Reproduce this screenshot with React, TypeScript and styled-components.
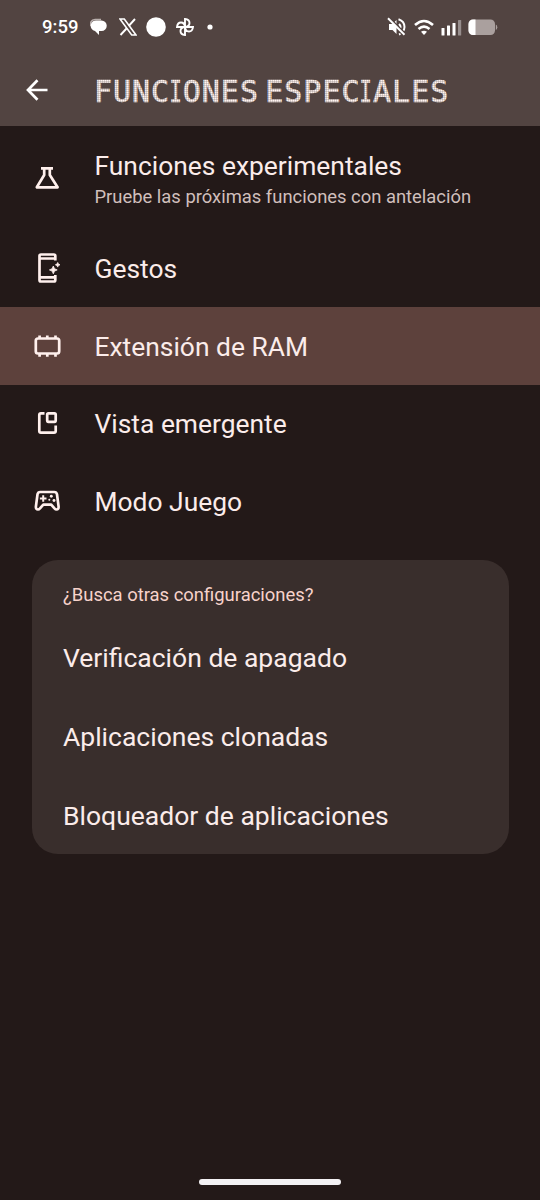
import React from "react";
import styled, { createGlobalStyle } from "styled-components";

const Global = createGlobalStyle`
  * { box-sizing: border-box; }
  body { margin: 0; background: #231918; }
`;

const Screen = styled.div`
  width: 540px;
  height: 1200px;
  display: flex;
  flex-direction: column;
  background: #231918;
  color: #fbecea;
  font-family: Roboto, "Liberation Sans", sans-serif;
  overflow: hidden;
`;

const TopArea = styled.header`
  height: 126px;
  flex: none;
  background: #524441;
`;

const StatusBar = styled.div`
  height: 54px;
  display: flex;
  justify-content: space-between;
  padding: 0 42px 0 42px;
  color: #fff;
`;

const StatusGroup = styled.div`
  display: flex;
  align-items: center;
`;

const Clock = styled.span`
  width: 48px;
  font-size: 18.5px;
  font-weight: 500;
  line-height: 52px;
  white-space: nowrap;
`;

const StatusIcon = styled.svg<{ $gap?: number }>`
  display: block;
  flex: none;
  margin-left: ${(p) => p.$gap ?? 0}px;
`;

const TitleBar = styled.div`
  height: 72px;
  display: flex;
  align-items: center;
  padding-left: 25px;
`;

const BackButton = styled.button`
  width: 69px;
  height: 24px;
  padding: 0;
  border: 0;
  background: none;
  color: #fff;
  flex: none;
`;

const DotTitle = styled.h1`
  position: relative;
  margin: 4px 0 0;
  height: 24px;
  width: 358px;
  font: 400 30px/24px "DejaVu Sans Mono", monospace;
  letter-spacing: 0.98px;
  word-spacing: -12.7px;
  white-space: nowrap;
  color: #fff4f1;
  -webkit-text-stroke: 0.6px #fff4f1;

  &::after {
    content: "";
    position: absolute;
    inset: -2px 0;
    background:
      repeating-linear-gradient(90deg, rgba(82, 68, 65, 0.2) 0 1px, transparent 1px 2px),
      repeating-linear-gradient(0deg, rgba(82, 68, 65, 0.2) 0 1px, transparent 1px 2px);
  }
`;

const NarrowLetter = styled.span`
  display: inline-block;
  width: 12.6px;
  transform: translateX(-0.5px) scaleX(0.68);
  transform-origin: 0 0;
`;

const List = styled.main`
  display: flex;
  flex-direction: column;
`;

const Row = styled.div<{ $active?: boolean; $tall?: boolean }>`
  height: ${(p) => (p.$tall ? 103.5 : 77.5)}px;
  display: flex;
  align-items: center;
  background: ${(p) => (p.$active ? "#5d413c" : "transparent")};
`;

const IconSlot = styled.div`
  width: 94.5px;
  height: 40px;
  flex: none;
  padding-left: 31px;
  display: flex;
  align-items: center;
`;

const Labels = styled.div<{ $tall?: boolean }>`
  display: flex;
  flex-direction: column;
  padding-top: ${(p) => (p.$tall ? 3.5 : 2)}px;
`;

const Label = styled.span<{ $size?: number }>`
  font-size: ${(p) => p.$size ?? 26.4}px;
  line-height: 34px;
  white-space: nowrap;
`;

const Detail = styled.span`
  font-size: 18.4px;
  line-height: 27px;
  color: #d0bfbc;
  white-space: nowrap;
`;

const Card = styled.section`
  margin: 20.5px 31.5px 0;
  height: 294px;
  border-radius: 26px;
  background: #392e2c;
  padding: 22px 31.5px 0;
`;

const CardHeading = styled.h2`
  margin: 0;
  height: 36px;
  font-size: 18.45px;
  font-weight: 400;
  line-height: 27px;
  color: #f7d3cb;
`;

const CardItem = styled.div`
  height: 79px;
  display: flex;
  align-items: center;
`;

const NavHandle = styled.div`
  width: 142px;
  height: 6px;
  border-radius: 3px;
  background: #f3f1f3;
  margin: auto auto 15px;
`;

const LineIcon = styled.svg`
  display: block;
  fill: none;
  stroke: #fff0ed;
  stroke-width: 2.7;
  stroke-linejoin: round;
`;

const Flask = () => (
  <LineIcon width="32" height="32" viewBox="0 0 32 32">
    <path d="M10 6.4h12M13.2 6.500v6.500L5.800 25.300h20.800L18.800 13v-6.500" />
  </LineIcon>
);

const Gesture = () => (
  <LineIcon width="32" height="32" viewBox="0 0 32 32">
    <path d="M24.300 8.500V4Q24.300 2.500 22.800 2.500H10Q8.500 2.500 8.500 4V28Q8.500 29.500 10 29.500H22.800Q24.300 29.500 24.300 28V23M8.500 6.500H24.300M8.500 25.300H24.300" />
    <path
      d="M22.300 14l1.200 2.700 2.700 1.200-2.700 1.200-1.200 2.700-1.200-2.700-2.700-1.200 2.700-1.200zM26.700 10.500l.7 1.600 1.600.7-1.600.7-.7 1.600-.7-1.600-1.600-.7 1.600-.7z"
      fill="#fff0ed"
      strokeWidth="0.8"
    />
  </LineIcon>
);

const Chip = () => (
  <LineIcon width="32" height="32" viewBox="0 0 32 32">
    <rect x="4.800" y="8.500" width="23.400" height="15" rx="2.200" />
    <path d="M8.600 5.500v3M16.300 5.500v3M24.500 5.500v3M8.600 23.500v3.300M16.300 23.500v3.300M24.500 23.500v3.300" />
  </LineIcon>
);

const Popup = () => (
  <LineIcon width="32" height="32" viewBox="0 0 32 32">
    <path d="M13.500 6.300H10Q8.300 6.300 8.300 8V24Q8.300 25.700 10 25.700H23Q24.700 25.700 24.700 24V18.500" />
    <rect x="16.200" y="6.300" width="8.500" height="8.500" rx="1.200" />
  </LineIcon>
);

const Gamepad = () => (
  <LineIcon width="32" height="32" viewBox="0 0 32 32">
    <path d="M9.300 7H23.200Q25.500 7 26 9.300L27.600 21.700Q27.700 24.500 25.500 24.500 24.500 24.500 23.500 23.400L20.200 19.600H12.300L9 23.400Q8 24.500 7 24.500 4.800 24.500 4.900 21.700L6.500 9.300Q7 7 9.300 7Z" />
    <path d="M12.200 10.200v6.600M8.900 13.500h6.600" strokeWidth="2" />
    <g fill="#fff0ed" stroke="none">
      <circle cx="20.300" cy="11.200" r="1.450" />
      <circle cx="23" cy="15.500" r="1.450" />
      <circle cx="18.300" cy="14.700" r="1" />
    </g>
  </LineIcon>
);

const settings = [
  { label: "Funciones experimentales", detail: "Pruebe las próximas funciones con antelación", icon: <Flask /> },
  { label: "Gestos", icon: <Gesture /> },
  { label: "Extensión de RAM", icon: <Chip />, active: true },
  { label: "Vista emergente", icon: <Popup /> },
  { label: "Modo Juego", icon: <Gamepad /> },
];

const related = ["Verificación de apagado", "Aplicaciones clonadas", "Bloqueador de aplicaciones"];

export default function App() {
  return (
    <Screen>
      <Global />
      <TopArea>
        <StatusBar>
          <StatusGroup>
            <Clock>9:59</Clock>
            <StatusIcon width="18" height="18" viewBox="0 0 18 18">
              <path d="M1 8C0 5 1 1.500 5 1.500h6" fill="none" stroke="#b9afad" strokeWidth="1.500" />
              <path d="M7 2.500h4.500a5.200 5.200 0 0 1 0 10.500H9v4l-4-4A5.300 5.300 0 0 1 7 2.500z" fill="#fff" />
            </StatusIcon>
            <StatusIcon $gap={11} width="18" height="18" viewBox="0 0 18 18" fill="none" stroke="#fff">
              <path d="M1 1h4.300L17 17h-4.300z" strokeWidth="1.600" />
              <path d="M16 1l-6.300 7M8 10l-6.500 7" strokeWidth="1.900" />
            </StatusIcon>
            <StatusIcon $gap={9} width="20" height="20" viewBox="0 0 20 20">
              <circle cx="10" cy="10" r="9.800" fill="#fff" />
            </StatusIcon>
            <StatusIcon $gap={10} width="18" height="18" viewBox="0 0 18 18" fill="none" stroke="#fff" strokeWidth="1.900">
              <path d="M9 9V1q4.500.5 4.500 4T9 9h8q-.5 4.500-4 4.500T9 9v8q-4.500-.5-4.500-4T9 9H1q.5-4.500 4-4.500T9 9" />
            </StatusIcon>
            <StatusIcon $gap={13} width="6" height="6" viewBox="0 0 6 6">
              <circle cx="3" cy="3" r="2.600" fill="#fff" />
            </StatusIcon>
          </StatusGroup>
          <StatusGroup>
            <StatusIcon width="20" height="20" viewBox="0 0 20 20" fill="none" stroke="#fff" strokeWidth="2">
              <path d="M2 7h3.500l4-4v14l-4-4H2z" fill="#fff" stroke="none" />
              <path d="M12 7q3 3 0 6M11.500 2.200q6 2 6 7.800 0 3-2 5M12 17.500l1.500-.6" />
              <path d="M2.500.8l17 17" stroke="#524441" strokeWidth="1.800" />
              <path d="M1 1.300l16.500 16.500" strokeWidth="2" />
            </StatusIcon>
            <StatusIcon $gap={7} width="20" height="17" viewBox="0 0 20 17" fill="none" stroke="#fff" strokeWidth="2.600">
              <path d="M1 6q9-8 18 0M4.500 10q5.500-4.800 11 0" />
              <path d="M10 16l-3-3.200q3-2.300 6 0z" fill="#fff" stroke="none" />
            </StatusIcon>
            <StatusIcon $gap={7} width="21" height="17" viewBox="0 0 21 17" fill="#fff">
              <rect x="0.500" y="9" width="3" height="7.500" rx="0.500" />
              <rect x="6" y="6.500" width="3" height="10" rx="0.500" />
              <rect x="11.500" y="4" width="3" height="12.500" rx="0.500" />
              <rect x="17" y="1" width="3.200" height="15.500" rx="0.500" opacity="0.400" />
            </StatusIcon>
            <StatusIcon $gap={6} width="30" height="17" viewBox="0 0 30 17">
              <rect x="0.500" y="0.500" width="26.500" height="15.500" rx="4.500" fill="#aaa09e" />
              <path d="M7.500.5H5a4.500 4.500 0 0 0-4.500 4.500v6.500A4.500 4.500 0 0 0 5 16h2.500z" fill="#fff" />
              <path d="M27.800 5.500q1.500.5 1.500 2.700t-1.500 2.700z" fill="#aaa09e" />
            </StatusIcon>
          </StatusGroup>
        </StatusBar>
        <TitleBar>
          <BackButton aria-label="Atrás">
            <StatusIcon width="24" height="24" viewBox="0 0 24 24" fill="none" stroke="#fff" strokeWidth="2.700">
              <path d="M12.500 2.300L3 12l9.500 9.700M3 12h19.500" />
            </StatusIcon>
          </BackButton>
          <DotTitle>
            FUNC<NarrowLetter>I</NarrowLetter>ONES ESPEC<NarrowLetter>I</NarrowLetter>ALES
          </DotTitle>
        </TitleBar>
      </TopArea>
      <List>
        {settings.map((item) => (
          <Row key={item.label} $active={item.active} $tall={!!item.detail}>
            <IconSlot>{item.icon}</IconSlot>
            <Labels $tall={!!item.detail}>
              <Label>{item.label}</Label>
              {item.detail && <Detail>{item.detail}</Detail>}
            </Labels>
          </Row>
        ))}
      </List>
      <Card>
        <CardHeading>¿Busca otras configuraciones?</CardHeading>
        {related.map((name) => (
          <CardItem key={name}>
            <Label $size={26.5}>{name}</Label>
          </CardItem>
        ))}
      </Card>
      <NavHandle />
    </Screen>
  );
}
